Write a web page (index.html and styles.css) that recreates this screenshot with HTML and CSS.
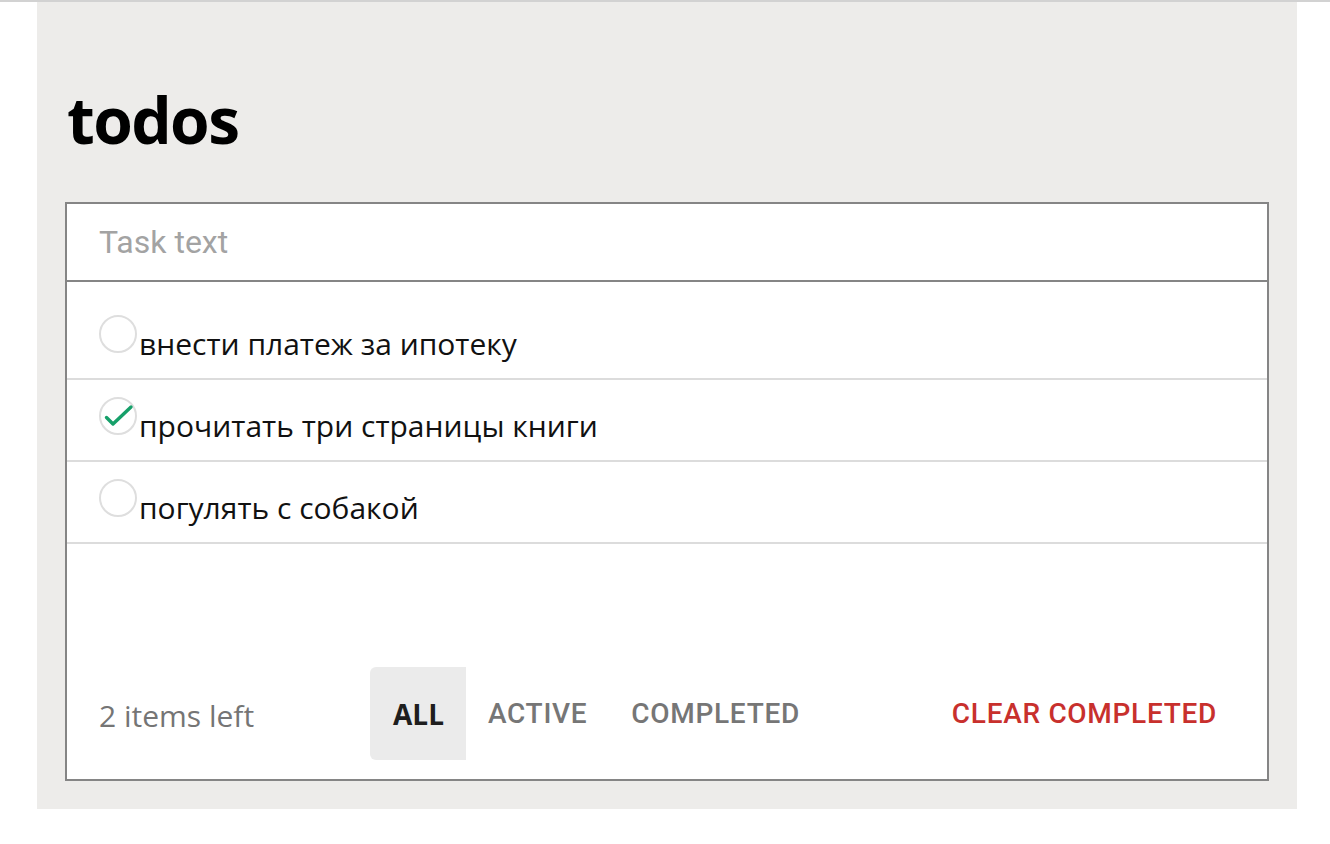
FILE: index.html
```html
<!DOCTYPE html>
<html lang="ru">
<head>
<meta charset="utf-8">
<title>todos</title>
<link rel="stylesheet" href="styles.css">
</head>
<body>
<div class="topline"></div>
<main class="app">
  <h1 class="title">todos</h1>
  <section class="card">
    <div class="new-task">
      <input class="new-task-input" type="text" placeholder="Task text">
    </div>
    <ul class="list">
      <li class="item"><span class="check"></span><span class="item-text">внести платеж за ипотеку</span></li>
      <li class="item"><span class="check done"><svg viewBox="0 0 38 38" width="38" height="38"><path d="M7.5 20.5 L14 27 L32 10" fill="none" stroke="#16a06a" stroke-width="3.4" stroke-linecap="round" stroke-linejoin="round"/></svg></span><span class="item-text">прочитать три страницы книги</span></li>
      <li class="item"><span class="check"></span><span class="item-text">погулять с собакой</span></li>
    </ul>
    <footer class="footer">
      <span class="count">2 items left</span>
      <div class="filters">
        <button class="filter selected">ALL</button>
        <button class="filter">ACTIVE</button>
        <button class="filter">COMPLETED</button>
      </div>
      <button class="clear">CLEAR COMPLETED</button>
    </footer>
  </section>
</main>
</body>
</html>
```
FILE: styles.css
```css
html, body {
  margin: 0;
  padding: 0;
  background: #ffffff;
}
body {
  font-family: "Open Sans", "Noto Sans", sans-serif;
}
.topline {
  height: 2px;
  background: #d2d2d2;
}
.app {
  width: 1260px;
  margin-left: 37px;
  background: #edecea;
  padding: 0 28px 28px;
  box-sizing: border-box;
  display: flex;
  flex-direction: column;
}
.title {
  margin: 0;
  height: 200px;
  box-sizing: border-box;
  padding: 78px 0 0 2px;
  font-family: "Open Sans", sans-serif;
  font-weight: 700;
  font-size: 64px;
  line-height: 80px;
  letter-spacing: -1.6px;
  color: #000;
}
.card {
  background: #fff;
  border: 2px solid #858585;
  display: flex;
  flex-direction: column;
}
.new-task {
  height: 76px;
  border-bottom: 2px solid #858585;
  display: flex;
  align-items: center;
}
.new-task-input {
  border: none;
  outline: none;
  width: 100%;
  height: 100%;
  padding: 0 32px;
  box-sizing: border-box;
  font-family: Roboto, sans-serif;
  font-size: 32px;
  color: #222;
  background: transparent;
}
.new-task-input::placeholder {
  color: #a3a3a3;
}
.list {
  list-style: none;
  margin: 0;
  padding: 16px 0 0;
  min-height: 385px;
  box-sizing: border-box;
}
.item {
  height: 80px;
  box-sizing: content-box;
  border-bottom: 2px solid #dcdcdc;
  padding: 0 32px;
  display: block;
  line-height: 1;
}
.check {
  display: inline-block;
  width: 38px;
  height: 38px;
  box-sizing: border-box;
  border: 2px solid #dedede;
  border-radius: 50%;
  margin-top: 17px;
  margin-bottom: 2px;
  vertical-align: baseline;
  position: relative;
}
.check svg {
  position: absolute;
  left: -2px;
  top: -2px;
}
.item-text {
  font-family: "Open Sans", sans-serif;
  font-size: 30px;
  color: #111;
  margin-left: 2px;
}
.footer {
  display: flex;
  align-items: center;
  padding: 0 28px 19px 32px;
  height: 93px;
  box-sizing: content-box;
}
.count {
  font-family: "Open Sans", sans-serif;
  font-size: 30px;
  color: #757575;
  width: 271px;
  flex: none;
  padding-top: 4px;
}
.filters {
  display: flex;
  height: 93px;
}
.filter, .clear {
  font-family: Roboto, sans-serif;
  font-weight: 500;
  font-size: 28px;
  letter-spacing: 0.7px;
  border: none;
  background: transparent;
  padding: 0 22px;
  height: 93px;
  color: #767676;
  cursor: pointer;
}
.filter.selected {
  background: #ebebeb;
  color: #1e1e1e;
  font-family: "Open Sans", sans-serif;
  font-weight: 700;
  border-radius: 6px 0 0 6px;
  letter-spacing: 0;
  padding: 0 22px 0 23px;
}
.clear {
  margin-left: auto;
  color: #c8302d;
}
```
